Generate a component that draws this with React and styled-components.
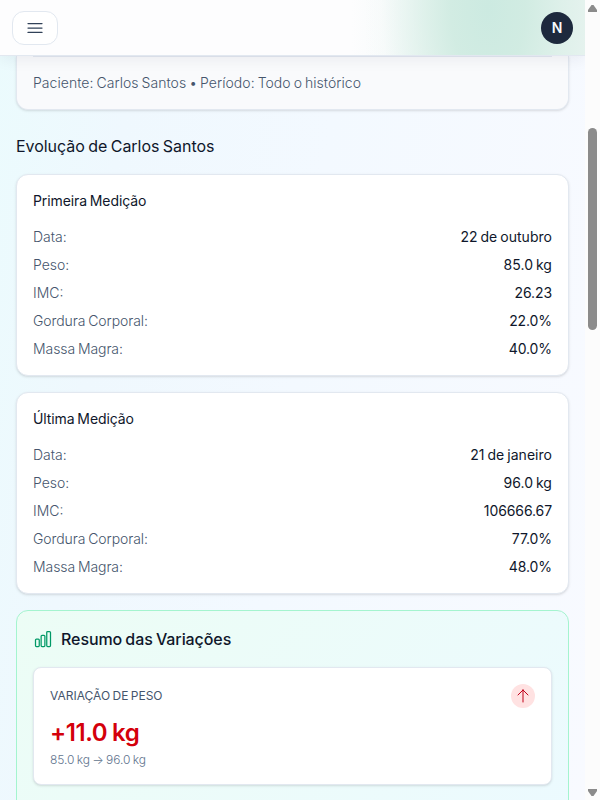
import React from "react";
import styled, { createGlobalStyle, css } from "styled-components";

const GlobalStyle = createGlobalStyle`
  * { box-sizing: border-box; }
  body {
    margin: 0;
    overflow: hidden;
    font-family: Inter, "Liberation Sans", sans-serif;
    color: #0f172b;
  }
  h2, h3, p, dl, dt, dd { margin: 0; font-weight: 400; }
`;

const Screen = styled.div`
  display: flex;
  width: 600px;
  height: 800px;
  overflow: hidden;
`;

const Page = styled.div`
  width: 585px;
  height: 800px;
  overflow: hidden;
  word-spacing: -1px;
  background: linear-gradient(98deg, #ebfbfd 0%, #eff8fe 20%, #f3f9ff 50%, #f8faff 100%);
`;

const Header = styled.header`
  position: relative;
  display: flex;
  align-items: center;
  justify-content: space-between;
  height: 56px;
  padding: 0 12px;
  border-bottom: 1px solid #e2e8f0;
  background:
    radial-gradient(ellipse 125px 240px at 488px 8px, #cceae1 0%, rgba(207, 235, 225, 0.9) 30%, rgba(217, 239, 231, 0.55) 60%, rgba(240, 248, 245, 0.15) 85%, rgba(253, 253, 254, 0) 100%),
    linear-gradient(90deg, #fdfdfe 0%, #fdfdfe 60%, #f6fafa 68%, #e5f2ee 86%, #e5f2ee 100%);
  box-shadow: 0 4px 14px rgba(15, 23, 43, 0.06);
`;

const MenuButton = styled.button`
  display: flex;
  align-items: center;
  justify-content: center;
  width: 46px;
  height: 34px;
  padding: 0;
  border: 1px solid #e2e8f0;
  border-radius: 12px;
  background: #fff;
  color: #314158;
`;

const Avatar = styled.div`
  width: 32px;
  height: 32px;
  border-radius: 50%;
  background: #1d293d;
  color: #f8fafc;
  font-size: 14px;
  font-weight: 600;
  line-height: 31px;
  text-align: center;
`;

const Main = styled.main`
  padding: 0 16px;
`;

const cardBase = css`
  border: 1px solid #e2e8f0;
  box-shadow: 0 1px 3px rgba(0, 0, 0, 0.1), 0 1px 2px -1px rgba(0, 0, 0, 0.1);
`;

const ReportCard = styled.section`
  ${cardBase}
  border-top: 0;
  border-radius: 0 0 12px 12px;
  padding: 0 16px 16px;
  background: #f9fafc;
`;

const ReportInfo = styled.p`
  padding-top: 16px;
  border-top: 1px solid #e2e8f0;
  color: #45556c;
  font-size: 14px;
  font-weight: 300;
  line-height: 20px;
  letter-spacing: 0.045px;
`;

const SectionTitle = styled.h2`
  margin: 24px 0 16px;
  font-size: 16px;
  line-height: 24px;
  letter-spacing: -0.04px;
`;

const Card = styled.section`
  ${cardBase}
  margin-bottom: 16px;
  padding: 16px;
  border-radius: 12px;
  background: #fff;
`;

const CardTitle = styled.h3`
  margin-bottom: 16px;
  font-size: 14px;
  line-height: 20px;
  letter-spacing: -0.1px;
`;

const Rows = styled.dl`
  display: grid;
  gap: 8px;
`;

const Row = styled.div`
  display: flex;
  justify-content: space-between;
  font-size: 14px;
  line-height: 20px;
`;

const Label = styled.dt`
  color: #45556c;
  font-weight: 300;
  letter-spacing: ${props => (props.children.includes(" ") ? -0.08 : 0)}px;
`;

const Value = styled.dd`
  letter-spacing: ${props => (props.children.includes(" ") ? 0.03 : -0.1)}px;
`;

const Summary = styled.section`
  height: 240px;
  padding: 16px;
  border: 1px solid #a4f4cf;
  border-radius: 12px;
  background: linear-gradient(135deg, #ecfdf5, #ecfaff);
`;

const SummaryTitle = styled.h2`
  display: flex;
  align-items: center;
  gap: 8px;
  margin-bottom: 16px;
  font-size: 16px;
  font-weight: 500;
  line-height: 24px;
  letter-spacing: -0.08px;
`;

const VariationCard = styled.div`
  ${cardBase}
  padding: 16px;
  border-radius: 8px;
  background: #fff;
`;

const VariationHead = styled.div`
  display: flex;
  align-items: center;
  justify-content: space-between;
  height: 24px;
  margin-bottom: 8px;
  color: #45556c;
  font-size: 12px;
  line-height: 16px;
`;

const Trend = styled.span`
  display: flex;
  align-items: center;
  justify-content: center;
  width: 24px;
  height: 24px;
  border-radius: 50%;
  background: #ffe2e2;
  color: #c10019;
`;

const Amount = styled.p`
  padding-top: 1px;
  margin-bottom: 3px;
  color: #d4000b;
  font-size: 24px;
  font-weight: 600;
  line-height: 32px;
  letter-spacing: -0.4px;
`;

const Range = styled.p`
  color: #62748e;
  font-size: 12px;
  font-weight: 300;
  line-height: 16px;
  letter-spacing: -0.05px;
`;

const Scrollbar = styled.div`
  display: flex;
  flex-direction: column;
  align-items: center;
  justify-content: space-between;
  width: 15px;
  padding: 5px 0 4px;
  background: #fcfcfc;
`;

const Track = styled.div`
  flex: 1;
  width: 9px;
  padding-top: 116px;
`;

const Thumb = styled.div`
  height: 202px;
  border-radius: 5px;
  background: #8b8b8b;
`;

const measurements = [
  {
    title: "Primeira Medição",
    rows: [
      ["Data:", "22 de outubro"],
      ["Peso:", "85.0 kg"],
      ["IMC:", "26.23"],
      ["Gordura Corporal:", "22.0%"],
      ["Massa Magra:", "40.0%"]
    ]
  },
  {
    title: "Última Medição",
    rows: [
      ["Data:", "21 de janeiro"],
      ["Peso:", "96.0 kg"],
      ["IMC:", "106666.67"],
      ["Gordura Corporal:", "77.0%"],
      ["Massa Magra:", "48.0%"]
    ]
  }
];

const MenuIcon = () => (
  <svg width="20" height="20" viewBox="0 0 20 20" fill="none" stroke="currentColor" strokeWidth="1.25" strokeLinecap="round">
    <path d="M3 5.6h14M3 10h14M3 14.4h14" />
  </svg>
);

const BarsIcon = () => (
  <svg width="20" height="20" viewBox="0 0 24 24" fill="none" stroke="#009966" strokeWidth="1.5" strokeLinecap="round" strokeLinejoin="round">
    <path d="M3 13.125C3 12.504 3.504 12 4.125 12h2.25c.621 0 1.125.504 1.125 1.125v6.75C7.5 20.496 6.996 21 6.375 21h-2.25A1.125 1.125 0 0 1 3 19.875v-6.75ZM9.75 8.625c0-.621.504-1.125 1.125-1.125h2.25c.621 0 1.125.504 1.125 1.125v11.25c0 .621-.504 1.125-1.125 1.125h-2.25a1.125 1.125 0 0 1-1.125-1.125V8.625ZM16.5 4.125c0-.621.504-1.125 1.125-1.125h2.25C20.496 3 21 3.504 21 4.125v15.75c0 .621-.504 1.125-1.125 1.125h-2.25a1.125 1.125 0 0 1-1.125-1.125V4.125Z" />
  </svg>
);

const ArrowUpIcon = () => (
  <svg width="16" height="16" viewBox="0 0 24 24" fill="none" stroke="currentColor" strokeWidth="1.5" strokeLinecap="round" strokeLinejoin="round">
    <path d="M4.5 10.5 12 3m0 0 7.5 7.5M12 3v18" />
  </svg>
);

const ScrollArrow = ({ down }) => (
  <svg width="9" height="7" viewBox="0 0 9 7" fill="#8b8b8b">
    <path d={down ? "M0 0h9v2L5.5 7h-2L0 2z" : "M0 7h9V5L5.5 0h-2L0 5z"} />
  </svg>
);

const App = () => (
  <Screen>
    <GlobalStyle />
    <Page>
      <Header>
        <MenuButton aria-label="Menu">
          <MenuIcon />
        </MenuButton>
        <Avatar>N</Avatar>
      </Header>
      <Main>
        <ReportCard>
          <ReportInfo>Paciente: Carlos Santos • Período: Todo o histórico</ReportInfo>
        </ReportCard>
        <SectionTitle>Evolução de Carlos Santos</SectionTitle>
        {measurements.map(({ title, rows }) => (
          <Card key={title}>
            <CardTitle>{title}</CardTitle>
            <Rows>
              {rows.map(([label, value]) => (
                <Row key={label}>
                  <Label>{label}</Label>
                  <Value>{value}</Value>
                </Row>
              ))}
            </Rows>
          </Card>
        ))}
        <Summary>
          <SummaryTitle>
            <BarsIcon />
            Resumo das Variações
          </SummaryTitle>
          <VariationCard>
            <VariationHead>
              VARIAÇÃO DE PESO
              <Trend>
                <ArrowUpIcon />
              </Trend>
            </VariationHead>
            <Amount>+11.0 kg</Amount>
            <Range>85.0 kg → 96.0 kg</Range>
          </VariationCard>
        </Summary>
      </Main>
    </Page>
    <Scrollbar>
      <ScrollArrow />
      <Track>
        <Thumb />
      </Track>
      <ScrollArrow down />
    </Scrollbar>
  </Screen>
);

export default App;
